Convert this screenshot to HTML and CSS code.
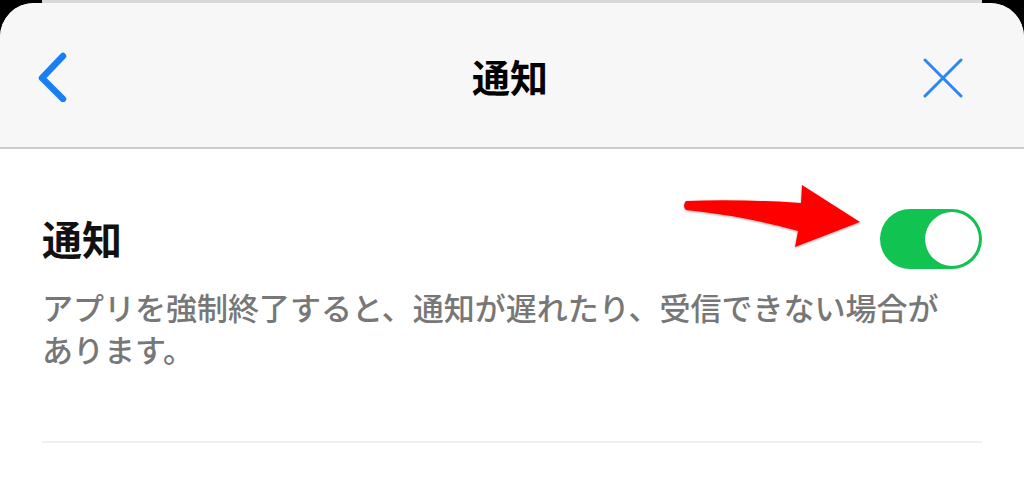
FILE: index.html
```
<!DOCTYPE html>
<html lang="ja">
<head>
<meta charset="utf-8" />
<meta name="viewport" content="width=device-width, initial-scale=1.0" />
<title>通知</title>
<link rel="stylesheet" href="styles.css">
</head>
<body class="screen">
	<div class="card-behind"></div>
	<div class="sheet">
		<header class="navbar">
			<span class="nav-btn back">
				<svg width="32" height="50" viewBox="0 0 32 50">
					<polyline points="26,4 5,26 26,47" fill="none" stroke="#1a7ff5" stroke-width="6.5" stroke-linecap="round" stroke-linejoin="round" />
				</svg>
			</span>
			<span class="nav-title">通知</span>
			<span class="nav-btn close">
				<svg width="40" height="40" viewBox="0 0 40 40">
					<path d="M2 2 L38 38 M38 2 L2 38" fill="none" stroke="#2a87f5" stroke-width="3" stroke-linecap="round" />
				</svg>
			</span>
		</header>
		<div class="content">
			<div class="setting-row">
				<span class="setting-label">通知</span>
				<span class="switch on"><span class="knob"></span></span>
			</div>
			<p class="setting-desc">アプリを強制終了すると、通知が遅れたり、受信できない場合があります。</p>
			<div class="divider"></div>
		</div>
		<!-- annotation arrow pointing at the switch -->
		<svg class="arrow" width="1024" height="483" viewBox="0 0 1024 483">
			<defs>
				<filter id="shadow" x="-10%" y="-30%" width="120%" height="160%">
					<feDropShadow dx="0" dy="1" stdDeviation="1.2" flood-color="#000" flood-opacity="0.35" />
				</filter>
			</defs>
			<path filter="url(#shadow)" fill="#ff0000"
				d="M686 201 Q740 199 801 203 L802 185 L860 222 L795 247 L798 231 Q745 216 686 210 Q682 205.5 686 201 Z" />
		</svg>
	</div>
</body>
</html>
```

FILE: styles.css
```
html {
	width: 100%;
	height: 100%;
}

.screen {
	margin: 0;
	height: 100%;
	overflow: hidden;
	background-color: #000000;
	font-family: "Noto Sans CJK JP", "Noto Sans", sans-serif;
}

.card-behind {
	height: 3px;
	margin: 0 42px;
	background-color: #d9d9d9;
}

.sheet {
	position: relative;
	height: 480px;
	background-color: #FFFFFF;
	border-radius: 34px 34px 0 0;
	overflow: hidden;
}

.navbar {
	height: 144px;
	display: grid;
	grid-template-columns: 1fr auto 1fr;
	align-items: center;
	padding: 0 40px;
	background-color: #f7f7f7;
	border-bottom: 2px solid #cdcdcd;
}

.nav-btn {
	display: flex;
	align-items: center;
}

.back {
	margin-left: -3px;
	margin-top: 4px;
}

.close {
	justify-content: flex-end;
	margin-right: 21px;
	margin-top: 6px;
}

.nav-title {
	font-size: 38px;
	font-weight: 700;
	color: #000000;
	margin-right: 4px;
}

.content {
	padding: 60px 42px 0;
}

.setting-row {
	display: flex;
	align-items: center;
	justify-content: space-between;
	height: 60px;
}

.setting-label {
	font-size: 40px;
	font-weight: 700;
	color: #111111;
	margin-top: -2px;
}

.switch {
	width: 102px;
	height: 60px;
	border-radius: 30px;
	background-color: #11c452;
	display: flex;
	align-items: center;
	justify-content: flex-end;
	padding: 0 3px;
	box-sizing: border-box;
}

.knob {
	width: 54px;
	height: 54px;
	border-radius: 50%;
	background-color: #FFFFFF;
	box-shadow: 0 0 1px rgba(0, 0, 0, 0.25);
}

.setting-desc {
	margin: 17px 20px 0 0;
	font-size: 31px;
	font-weight: 500;
	line-height: 42px;
	color: #777777;
}

.divider {
	margin-top: 71px;
	height: 2px;
	background-color: #efefef;
}

.arrow {
	position: absolute;
	top: -3px;
	left: 0;
	pointer-events: none;
}
```
